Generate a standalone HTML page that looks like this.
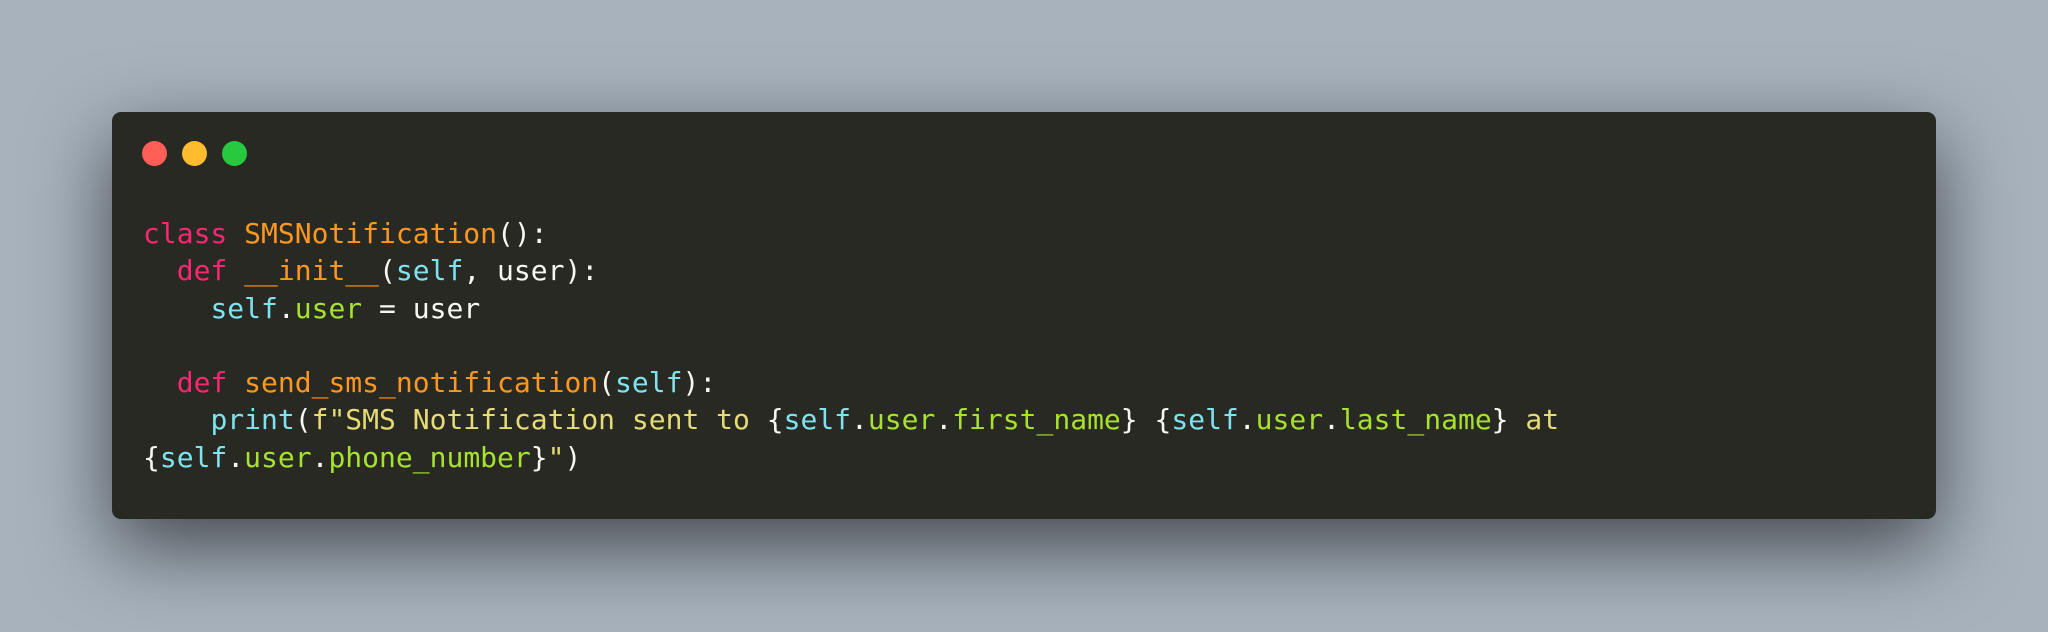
<!DOCTYPE html>
<html><head><meta charset="utf-8"><style>
html,body{margin:0;padding:0;}
body{width:2048px;height:632px;background:#a7b2bd;position:relative;overflow:hidden;}
.win{position:absolute;left:112px;top:112px;width:1824px;height:407px;background:#282923;border-radius:9px;box-shadow:0 28px 80px rgba(0,0,0,0.6);}
.dot{position:absolute;top:141px;width:25px;height:25px;border-radius:50%;}
pre{position:absolute;left:143px;top:215px;margin:0;font-family:"DejaVu Sans Mono","Liberation Mono",monospace;font-size:28px;line-height:37.3px;color:#f8f8f2;white-space:pre;}
.k{color:#f92672}.o{color:#fd971f}.c{color:#7ee3ee}.g{color:#a6e22e}.y{color:#e6db74}
</style></head><body>
<div class="win"></div>
<div class="dot" style="left:142px;background:#ff5f56"></div>
<div class="dot" style="left:182px;background:#ffbd2e"></div>
<div class="dot" style="left:222px;background:#27c93f"></div>
<pre><span class="k">class</span> <span class="o">SMSNotification</span>():
  <span class="k">def</span> <span class="o">__init__</span>(<span class="c">self</span>, user):
    <span class="c">self</span>.<span class="g">user</span> = user

  <span class="k">def</span> <span class="o">send_sms_notification</span>(<span class="c">self</span>):
    <span class="c">print</span>(<span class="y">f"SMS Notification sent to </span>{<span class="c">self</span>.<span class="g">user</span>.<span class="g">first_name</span>} {<span class="c">self</span>.<span class="g">user</span>.<span class="g">last_name</span>}<span class="y"> at</span>
{<span class="c">self</span>.<span class="g">user</span>.<span class="g">phone_number</span>}<span class="y">"</span>)</pre>
</body></html>
